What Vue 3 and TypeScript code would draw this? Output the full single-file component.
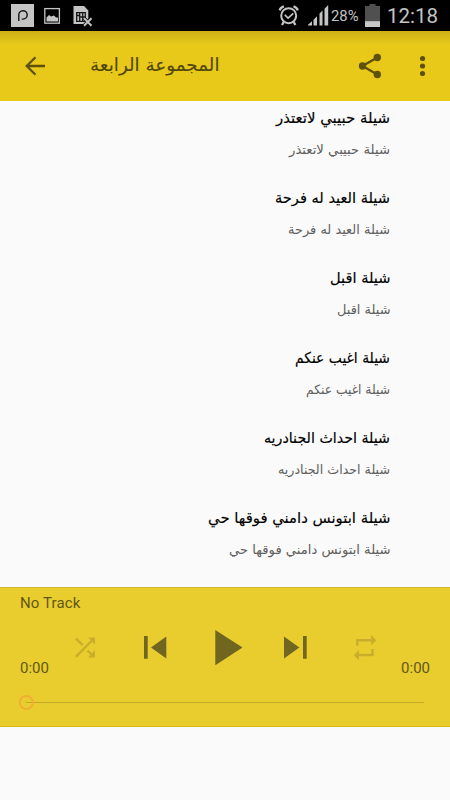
<script setup lang="ts">
interface Track {
  name: string
  titleWidth: number
  artistWidth: number
}

const tracks: Track[] = [
  { name: 'شيلة حبيبي لاتعتذر', titleWidth: 114, artistWidth: 101 },
  { name: 'شيلة العيد له فرحة', titleWidth: 115, artistWidth: 102 },
  { name: 'شيلة اقبل', titleWidth: 60.5, artistWidth: 53.5 },
  { name: 'شيلة اغيب عنكم', titleWidth: 95, artistWidth: 84 },
  { name: 'شيلة احداث الجنادريه', titleWidth: 126, artistWidth: 112 },
  { name: 'شيلة ابتونس دامني فوقها حي', titleWidth: 182.5, artistWidth: 161.5 },
]
</script>

<template>
  <div class="screen">
    <header class="status">
      <svg class="notices" width="100" height="31" viewBox="0 0 100 31">
        <rect x="11" y="4" width="23" height="23" fill="#c4c4c4" />
        <path d="M18.800 21V15a4.200 4.200 0 1 1 4.300 4.100h-1.400" fill="none" stroke="#161616" stroke-width="1.400" />
        <rect x="44.800" y="8.600" width="14.600" height="14.600" fill="none" stroke="#c4c4c4" stroke-width="1.300" />
        <path d="M46.500 21.500v-4l2.500-2.500 2 1.500 3-1 2 2 2 0v4z" fill="#c4c4c4" />
        <path d="M73.500 6h10.500l4.300 4.500V24H73.500z" fill="#c4c4c4" />
        <path d="M76.700 12.700h8.600v8.600h-8.600zM76.700 15.500h3M79.700 12.700v8.600M82.700 12.700v8.600M79.700 17h5.600" fill="none" stroke="#161616" stroke-width="1.300" />
        <path d="M84 18.300l7.500 7.400m0-7.400L84 25.700" stroke="#000" stroke-width="3.600" />
        <path d="M84 18.300l7.500 7.400m0-7.400L84 25.700" stroke="#c4c4c4" stroke-width="2" />
      </svg>
      <div class="system">
        <svg width="60" height="31" viewBox="0 0 60 31">
          <g fill="none" stroke="#c4c4c4">
            <circle cx="17.700" cy="15.700" r="7.500" stroke-width="2" />
            <path d="M13.800 14.800l3.300 3.300 5.200-4.800" stroke-width="1.700" />
            <path d="M8.600 10.300q1-3 4.300-4M26.800 10.300q-1-3-4.300-4" stroke-width="2.300" />
            <path d="M12.700 22l-1.700 3M22.700 22l1.700 3" stroke-width="2.300" />
          </g>
          <path d="M36.500 25.500v-.8l4-3.500v4.300zM42 25.500v-5.800l3.500-3.500v9.300zM48 25.500V13.500l3-3v15zM53 25.500V8.700l3.700-3.700v20.500z" transform="translate(.5 0)" fill="#c4c4c4" />
        </svg>
        <span class="percent">28%</span>
        <svg class="battery" width="15" height="23" viewBox="0 0 15 23">
          <path d="M0 2h4.500V0h6v2H15v21H0z" fill="#505050" />
          <path d="M0 17.200h15V23H0z" fill="#c8c8c8" />
        </svg>
        <span class="clock">12:18</span>
      </div>
    </header>

    <nav class="toolbar">
      <svg class="back" width="20" height="20" viewBox="0 0 20 20">
        <path d="M20 10H2M10.500 1.200L1.700 10l8.800 8.800" />
      </svg>
      <svg class="heading" width="130" height="36" viewBox="0 0 130 36">
        <text x="0" y="23" textLength="129.500" lengthAdjust="spacingAndGlyphs">المجموعة الرابعة</text>
      </svg>
      <svg class="share" width="24" height="26" viewBox="0 0 24 26">
        <path d="M19.300 4.500L4.500 13l14.800 8.500" fill="none" stroke="#5e5208" stroke-width="2.300" />
        <g fill="#5e5208">
          <circle cx="19.300" cy="4.500" r="3.700" />
          <circle cx="4.500" cy="13" r="3.700" />
          <circle cx="19.300" cy="21.500" r="3.700" />
        </g>
      </svg>
      <svg class="more" width="6" height="22" viewBox="0 0 6 22" fill="#5e5208">
        <circle cx="2.500" cy="3.500" r="2.600" />
        <circle cx="2.500" cy="11" r="2.600" />
        <circle cx="2.500" cy="18.500" r="2.600" />
      </svg>
    </nav>

    <main class="list">
      <article v-for="track in tracks" :key="track.name" class="track">
        <svg class="title" :width="track.titleWidth" height="34" :viewBox="`0 0 ${track.titleWidth} 34`">
          <text x="0" y="22" :textLength="track.titleWidth" lengthAdjust="spacingAndGlyphs">{{ track.name }}</text>
        </svg>
        <svg class="artist" :width="track.artistWidth" height="30" :viewBox="`0 0 ${track.artistWidth} 30`">
          <text x="0" y="19" :textLength="track.artistWidth" lengthAdjust="spacingAndGlyphs">{{ track.name }}</text>
        </svg>
      </article>
    </main>

    <footer class="player">
      <div class="now">No Track</div>
      <div class="deck">
        <span class="time">0:00</span>
        <svg class="controls" width="320" height="50" viewBox="0 0 320 50">
          <g fill="none" stroke="#c9af29" stroke-width="2.400">
            <path d="M10.800 34.800L28 17.500M10.800 16.300l6.800 6.800M22.500 28.500l6 6" />
            <path d="M292.300 23.800V18.200h14.500M307.500 27v6h-15" />
          </g>
          <path d="M23 15.500h7v7zM30 28v7.500h-7zM306 13l5.300 5.200-5.300 5zM294 28l-5.300 5.200 5.300 5z" fill="#c9af29" />
          <path d="M79 14h3.700v22.700H79zM101.300 14.500v22L86 25.500zM150.300 8v35.300L177.500 25.500zM219 14.500v22l15.300-11zM238 14h3.700v22.700H238z" fill="#706620" />
        </svg>
        <span class="time end">0:00</span>
      </div>
      <svg class="seek" width="410" height="18" viewBox="0 0 410 18">
        <path d="M10 9.500h398" stroke="#c3aa28" />
        <circle cx="10.300" cy="9.500" r="6.500" fill="none" stroke="#f0ae32" stroke-width="2" />
      </svg>
    </footer>
  </div>
</template>

<style>
body {
  background: #fafafa;
}
</style>

<style scoped>
.screen {
  width: 450px;
  height: 800px;
  overflow: hidden;
  background: #fafafa;
  font-family: Roboto, sans-serif;
}

svg {
  display: block;
  flex: none;
}

.status {
  height: 31px;
  background: #000;
  color: #c4c4c4;
  display: flex;
  justify-content: space-between;
}

.system {
  display: flex;
  align-items: flex-start;
  width: 179px;
}

.percent {
  width: 34px;
  font-size: 14.8px;
  line-height: 33px;
}

.battery {
  margin-top: 4px;
}

.clock {
  margin-left: 7px;
  font-size: 20.5px;
  line-height: 32px;
}

.toolbar {
  height: 70px;
  display: flex;
  align-items: center;
  background: linear-gradient(#cdb017, #e8c91a 14px);
}

.back {
  margin-left: 25px;
  fill: none;
  stroke: #5e5208;
  stroke-width: 2.3;
}

.heading {
  margin-left: 45px;
  overflow: visible;
  font-family: "DejaVu Sans", sans-serif;
  font-size: 18px;
  fill: #514709;
  stroke: #514709;
  stroke-width: 0.1px;
}

.share {
  margin-left: 138px;
}

.more {
  margin-left: 38px;
}

.list {
  height: 486px;
  overflow: hidden;
}

.track {
  height: 80px;
  padding-right: 60px;
  display: flex;
  flex-direction: column;
  align-items: flex-end;
}

.title,
.artist {
  overflow: visible;
  font-family: "DejaVu Sans", sans-serif;
}

.title {
  font-size: 15px;
  fill: #000;
  stroke: #000;
  stroke-width: 0.15px;
}

.artist {
  font-size: 13px;
  fill: #606060;
}

.player {
  box-sizing: border-box;
  height: 140px;
  border-top: 1px solid #d1b72b;
  border-bottom: 1px solid #d5b915;
  background: #e9cd2f;
  color: #625718;
  padding: 5px 20px 0;
}

.now {
  font-size: 15px;
  line-height: 20px;
  letter-spacing: 0.12px;
}

.deck {
  display: flex;
  align-items: flex-end;
  height: 68px;
  margin-top: -3px;
}

.controls {
  margin: 0 -10px 6px;
}

.time {
  flex: none;
  width: 55px;
  font-size: 15px;
  line-height: 20px;
}

.time.end {
  text-align: right;
}

.seek {
  margin: 15px 0 0 -4px;
}
</style>
